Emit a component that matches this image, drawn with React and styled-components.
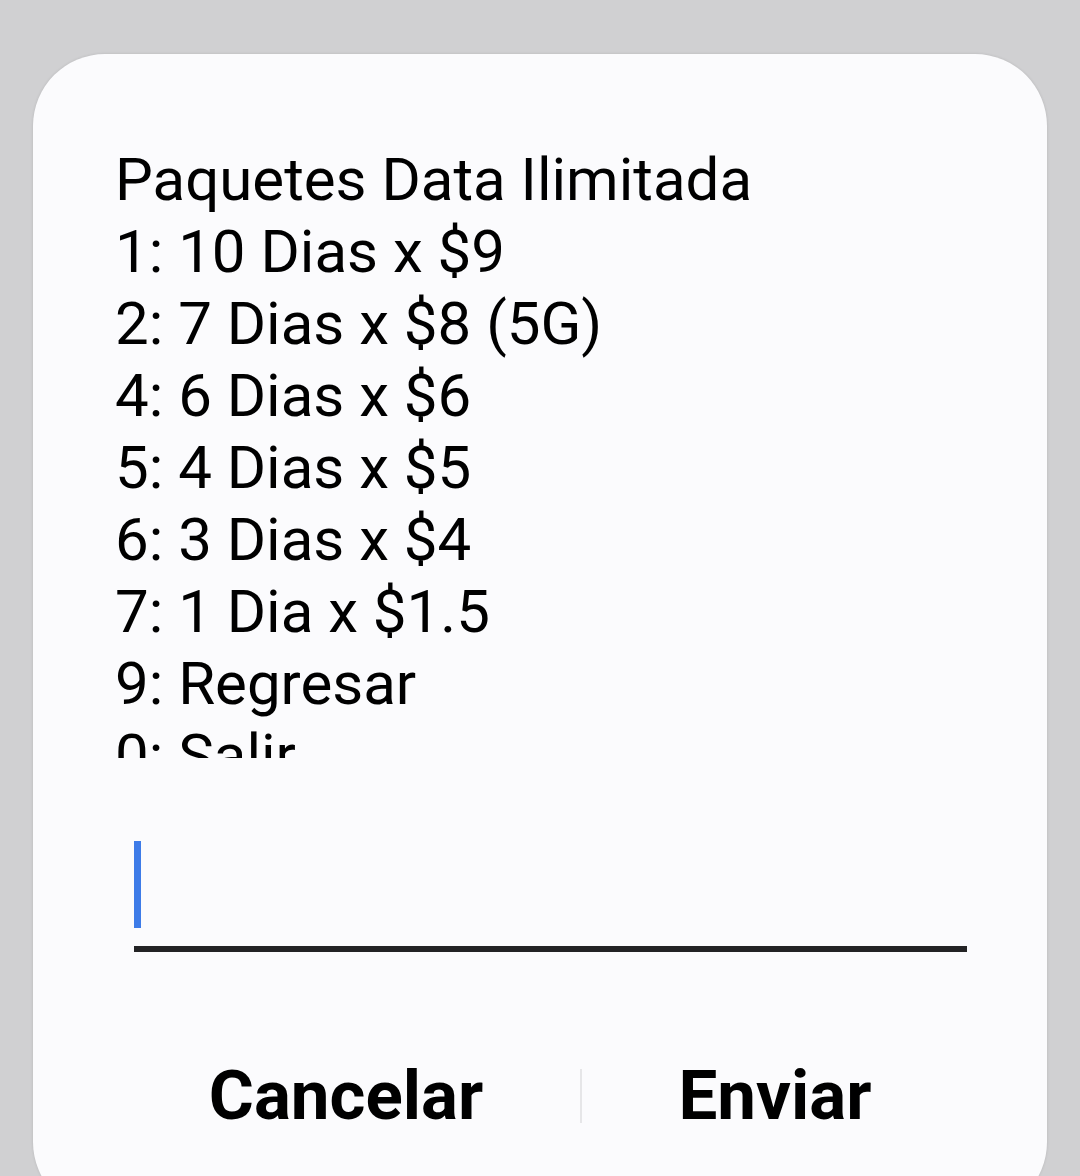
import React from "react";
import styled, { createGlobalStyle } from "styled-components";

const Global = createGlobalStyle`
  html, body { margin: 0; padding: 0; }
  body {
    width: 1080px;
    height: 1176px;
    overflow: hidden;
    background: #d0d0d2;
    font-family: Roboto, "Noto Sans", sans-serif;
  }
`;

const Screen = styled.div`
  width: 1080px;
  height: 1176px;
  padding-top: 54px;
  box-sizing: border-box;
  display: flex;
  justify-content: center;
`;

const Dialog = styled.div`
  width: 1014px;
  height: 1160px;
  flex-shrink: 0;
  background: #fbfbfd;
  border-radius: 72px;
  box-shadow: 0 0 3px rgba(0, 0, 0, 0.12);
  display: flex;
  flex-direction: column;
  box-sizing: border-box;
  padding-top: 90px;
`;

const Message = styled.div`
  height: 614px;
  overflow: hidden;
  padding-left: 82px;
  font-size: 60px;
  line-height: 72px;
  color: #000;
  white-space: pre;
`;

const Line = styled.div``;

const InputWrap = styled.div`
  margin: 82px 80px 0 101px;
  height: 106px;
  border-bottom: 6px solid #232325;
  position: relative;
`;

const Caret = styled.div`
  position: absolute;
  left: 0;
  top: 1px;
  width: 7px;
  height: 87px;
  background: #3d7be8;
`;

const Actions = styled.div`
  display: grid;
  grid-template-columns: 468px 2px 386px;
  align-items: center;
  margin-left: 79px;
  margin-top: 116px;
  height: 56px;
`;

const ActionButton = styled.button`
  border: none;
  background: none;
  padding: 0;
  font-family: Roboto, "Noto Sans", sans-serif;
  font-weight: 700;
  font-size: 69px;
  color: #000;
  text-align: center;
  line-height: 56px;
`;

const Divider = styled.div`
  width: 2px;
  height: 54px;
  background: #e6e6e8;
`;

const lines = [
  "Paquetes Data Ilimitada",
  "1: 10 Dias x $9",
  "2: 7 Dias x $8 (5G)",
  "4: 6 Dias x $6",
  "5: 4 Dias x $5",
  "6: 3 Dias x $4",
  "7: 1 Dia x $1.5",
  "9: Regresar",
  "0: Salir",
];

export default function App() {
  return (
    <>
      <Global />
      <Screen>
        <Dialog>
          <Message>
            {lines.map((l) => (
              <Line key={l}>{l}</Line>
            ))}
          </Message>
          <InputWrap>
            <Caret />
          </InputWrap>
          <Actions>
            <ActionButton>Cancelar</ActionButton>
            <Divider />
            <ActionButton>Enviar</ActionButton>
          </Actions>
        </Dialog>
      </Screen>
    </>
  );
}
